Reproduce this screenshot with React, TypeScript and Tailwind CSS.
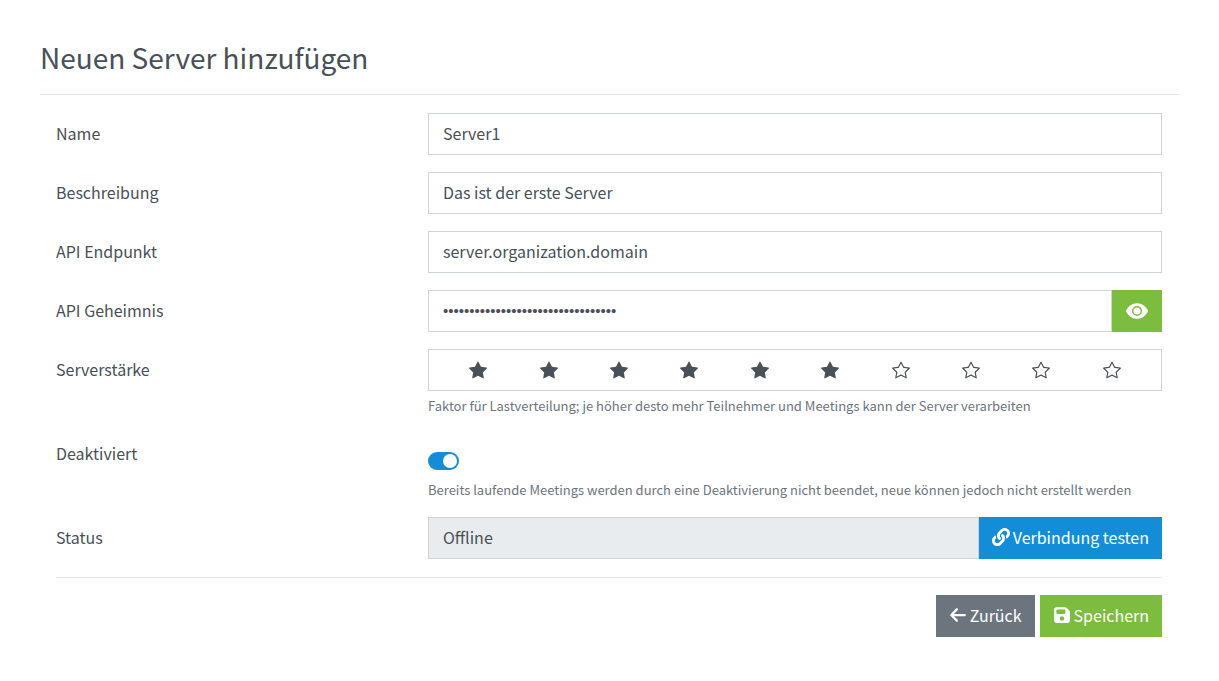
import { useState } from "react";
import type { ReactNode } from "react";
import { FaLink } from "react-icons/fa";
import { FaArrowLeft, FaFloppyDisk } from "react-icons/fa6";
import { BsStar, BsStarFill } from "react-icons/bs";

const box =
  "h-[42px] w-full min-w-0 border border-[#ced4da] px-3.5 pb-0.5 text-[#495057] outline-none focus:border-[#148dd9]";
const field = `${box} bg-white text-base`;
const button = "flex h-[42px] shrink-0 items-center gap-[3px] px-[13px] pb-0.5 text-base text-white";

function EyeIcon() {
  return (
    <svg viewBox="0 0 22 16" className="h-4 w-[22px]" aria-hidden="true">
      <path fill="currentColor" d="M0 8C2 3.2 6 .2 11 .2S20 3.2 22 8c-2 4.8-6 7.8-11 7.8S2 12.8 0 8z" />
      <circle cx="11" cy="8" r="4.3" fill="none" stroke="#7cbc3f" strokeWidth="1.4" />
    </svg>
  );
}

function Row({ id, label, hint, children }: { id: string; label: string; hint?: string; children: ReactNode }) {
  return (
    <div className="grid grid-cols-[1fr_2fr] gap-[5px]">
      <label htmlFor={id} className="flex h-10 items-center">
        {label}
      </label>
      <div>
        <div className="flex h-[42px] items-center">{children}</div>
        {hint && <p className="mt-1 text-[13px] leading-[21px] text-[#6c757d]">{hint}</p>}
      </div>
    </div>
  );
}

export default function App() {
  const [visible, setVisible] = useState(false);
  const [strength, setStrength] = useState(6);
  const [disabled, setDisabled] = useState(true);

  return (
    <main className="px-10 pt-[39px] pb-10 font-['Noto_Sans_CJK_SC',sans-serif] text-base text-[#495057]">
      <h2 className="text-[28px] leading-9">Neuen Server hinzufügen</h2>
      <hr className="mt-[19px] border-[#e5e5e5]" />
      <form className="pt-[18px] pr-[17px] pl-4" onSubmit={(e) => e.preventDefault()}>
        <div className="flex flex-col gap-[17px]">
          <Row id="name" label="Name">
            <input id="name" className={field} defaultValue="Server1" />
          </Row>
          <Row id="description" label="Beschreibung">
            <input id="description" className={field} defaultValue="Das ist der erste Server" />
          </Row>
          <Row id="endpoint" label="API Endpunkt">
            <input id="endpoint" className={field} defaultValue="server.organization.domain" />
          </Row>
          <Row id="secret" label="API Geheimnis">
            <input
              id="secret"
              type={visible ? "text" : "password"}
              className={visible ? field : `${box} bg-white font-['Liberation_Sans',sans-serif] text-[15px]`}
              defaultValue="abcdefghijklmnopqrstuvwxyz0123456"
            />
            <button
              type="button"
              aria-label="API Geheimnis anzeigen"
              onClick={() => setVisible(!visible)}
              className="flex h-[42px] w-[50px] shrink-0 items-center justify-center bg-[#7cbc3f] text-white"
            >
              <EyeIcon />
            </button>
          </Row>
          <Row
            id="strength"
            label="Serverstärke"
            hint="Faktor für Lastverteilung; je höher desto mehr Teilnehmer und Meetings kann der Server verarbeiten"
          >
            <div
              id="strength"
              role="group"
              aria-label="Serverstärke"
              className="flex h-[42px] w-full items-center border border-[#ced4da] px-3.5"
            >
              {Array.from({ length: 10 }, (_, i) => (
                <button
                  key={i}
                  type="button"
                  aria-label={`${i + 1} von 10`}
                  onClick={() => setStrength(i + 1)}
                  className="flex flex-1 justify-center"
                >
                  {i < strength ? <BsStarFill className="size-[18px]" /> : <BsStar className="size-[18px]" />}
                </button>
              ))}
            </div>
          </Row>
          <Row
            id="disabled"
            label="Deaktiviert"
            hint="Bereits laufende Meetings werden durch eine Deaktivierung nicht beendet, neue können jedoch nicht erstellt werden"
          >
            <input
              id="disabled"
              type="checkbox"
              role="switch"
              checked={disabled}
              onChange={(e) => setDisabled(e.target.checked)}
              className="mt-3.5 flex h-[18px] w-[31px] appearance-none items-center rounded-full bg-[#adb5bd] px-0.5 before:size-3.5 before:rounded-full before:bg-white checked:justify-end checked:bg-[#148dd9]"
            />
          </Row>
          <Row id="status" label="Status">
            <input id="status" readOnly className={`${box} bg-[#e9ecef] text-base`} value="Offline" />
            <button type="button" className={`${button} bg-[#148dd9]`}>
              <FaLink className="size-[18px]" />
              Verbindung testen
            </button>
          </Row>
        </div>
        <hr className="mt-[18px] mb-[17px] border-[#e5e5e5]" />
        <div className="flex justify-end gap-[5px]">
          <button type="button" className={`${button} bg-[#6c757d]`}>
            <FaArrowLeft className="size-[18px]" />
            Zurück
          </button>
          <button type="submit" className={`${button} bg-[#7cbc3f]`}>
            <FaFloppyDisk className="size-[18px]" />
            Speichern
          </button>
        </div>
      </form>
    </main>
  );
}
